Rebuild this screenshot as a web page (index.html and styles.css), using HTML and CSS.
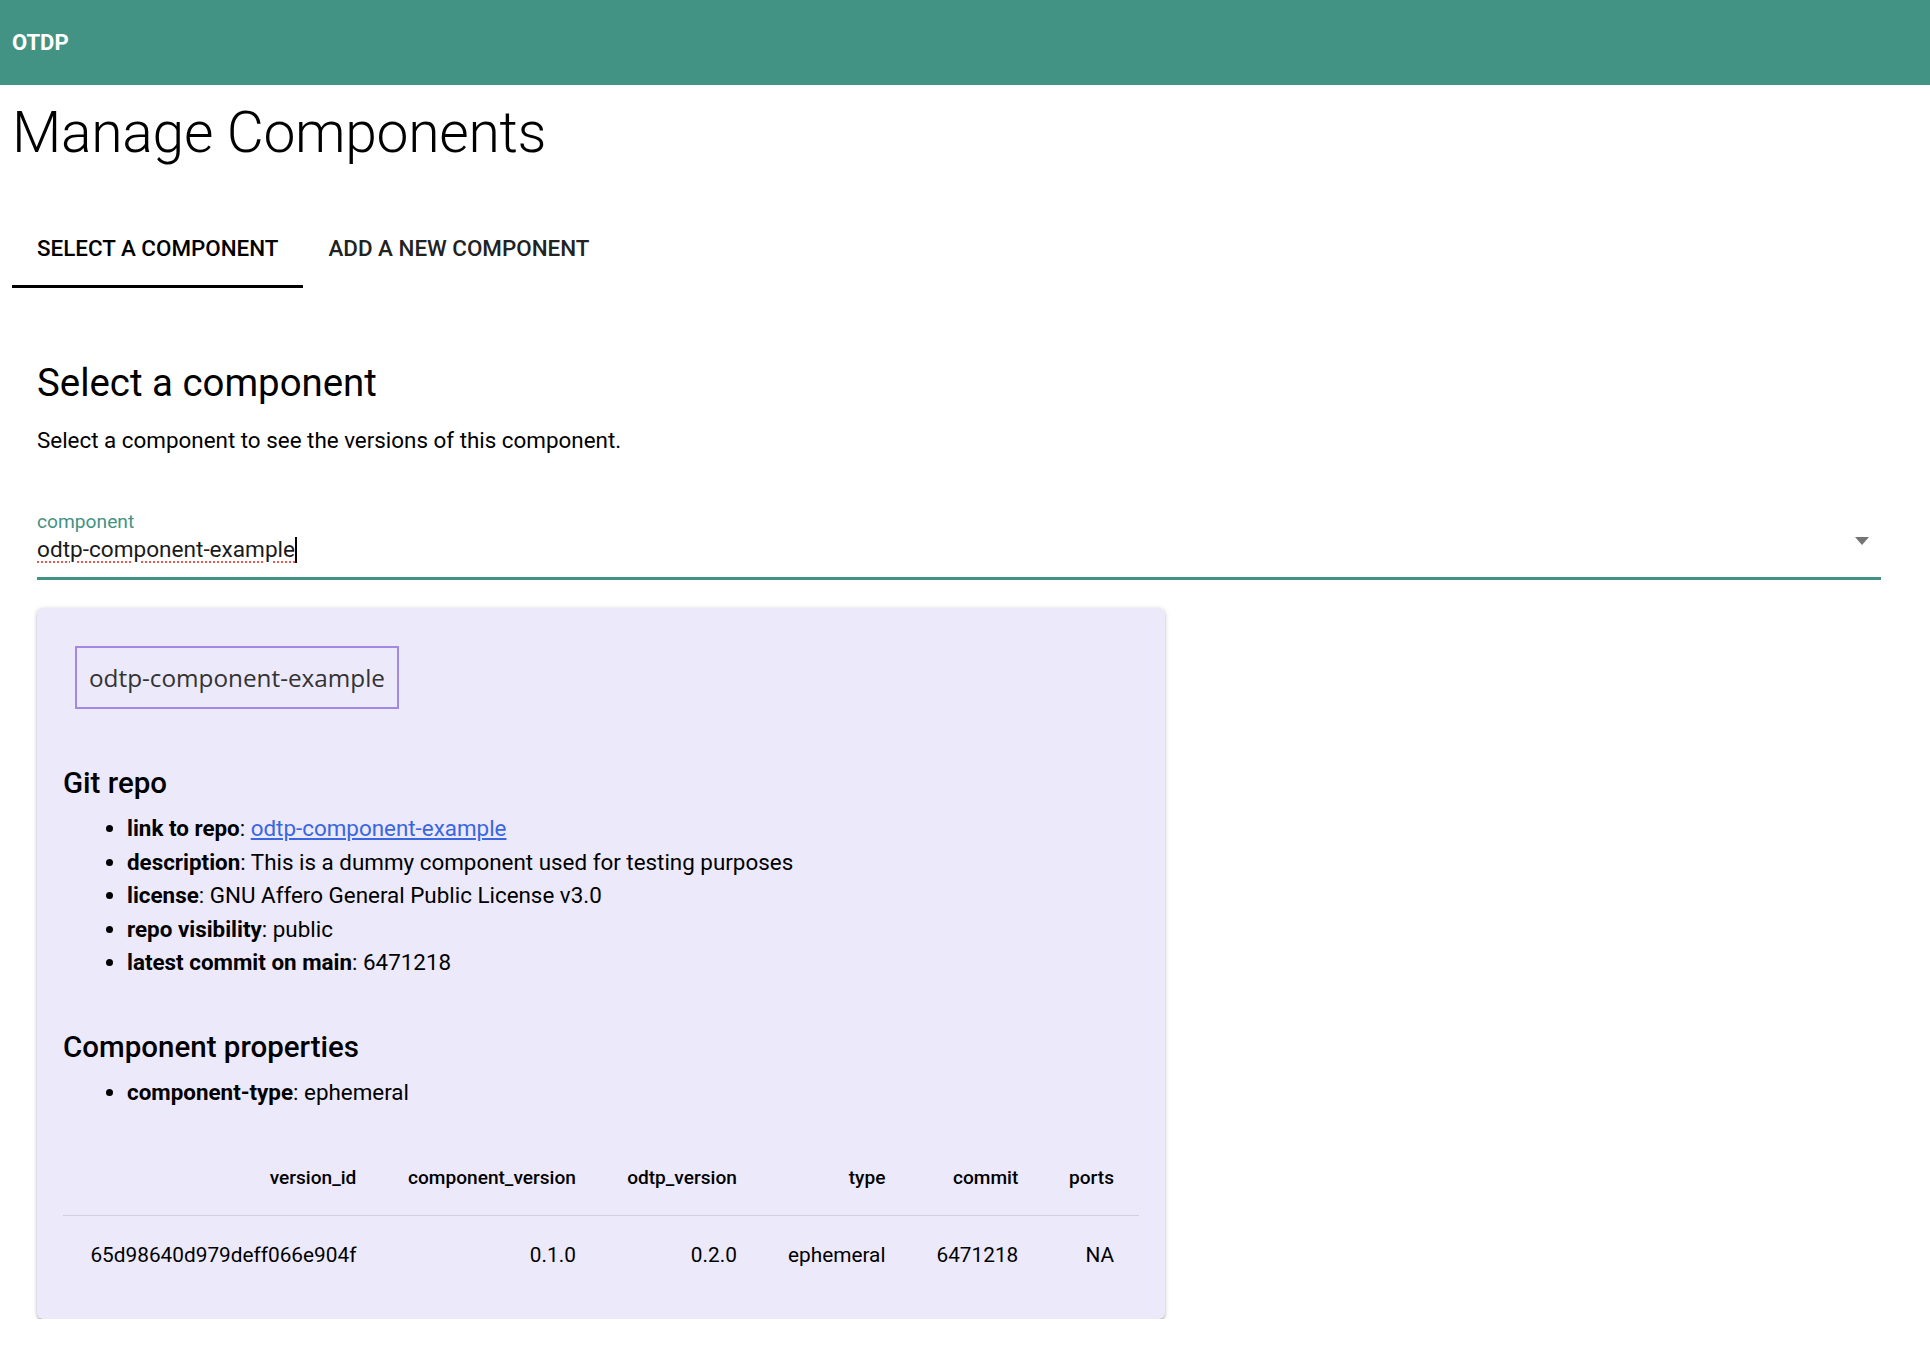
FILE: index.html
```html
<!DOCTYPE html>
<html>
<head>
<meta charset="utf-8">
<title>OTDP - Manage Components</title>
<link rel="stylesheet" href="styles.css">
</head>
<body>
<header class="topbar"><span class="brand">OTDP</span></header>
<main class="page">
  <h1 class="title">Manage Components</h1>
  <nav class="tabs">
    <div class="tab active">SELECT A COMPONENT</div>
    <div class="tab">ADD A NEW COMPONENT</div>
  </nav>
  <section class="panel">
    <h2 class="section-title">Select a component</h2>
    <p class="lead">Select a component to see the versions of this component.</p>
    <div class="field">
      <div class="field-main">
        <div class="field-label">component</div>
        <div class="field-value"><span class="misspelled">odtp-component-example</span><span class="caret"></span></div>
      </div>
      <span class="arrow"></span>
    </div>
    <div class="card">
      <div class="chip">odtp-component-example</div>
      <h3 class="card-title">Git repo</h3>
      <ul class="props">
        <li><b>link to repo</b>: <a href="#">odtp-component-example</a></li>
        <li><b>description</b>: This is a dummy component used for testing purposes</li>
        <li><b>license</b>: GNU Affero General Public License v3.0</li>
        <li><b>repo visibility</b>: public</li>
        <li><b>latest commit on main</b>: 6471218</li>
      </ul>
      <h3 class="card-title second">Component properties</h3>
      <ul class="props">
        <li><b>component-type</b>: ephemeral</li>
      </ul>
      <table class="versions">
        <thead>
          <tr><th>version_id</th><th>component_version</th><th>odtp_version</th><th>type</th><th>commit</th><th>ports</th></tr>
        </thead>
        <tbody>
          <tr><td>65d98640d979deff066e904f</td><td>0.1.0</td><td>0.2.0</td><td>ephemeral</td><td>6471218</td><td>NA</td></tr>
        </tbody>
      </table>
    </div>
  </section>
</main>
</body>
</html>
```

FILE: styles.css
```css
* { box-sizing: border-box; }
html, body { margin: 0; padding: 0; background: #fff; }
body { font-family: Roboto, "Liberation Sans", sans-serif; color: #000; }

.topbar {
  height: 85px;
  background: #439384;
  display: flex;
  align-items: center;
  padding-left: 12px;
}
.brand { color: #fff; font-size: 22px; font-weight: 700; }

.page { padding: 0 12px; }

.title {
  margin: 14px 0 0;
  font-size: 57px;
  line-height: 68px;
  font-weight: 300;
  letter-spacing: -0.3px;
}

.tabs { display: flex; margin-top: 47px; }
.tab {
  height: 74px;
  padding: 0 25px 3px;
  display: flex;
  align-items: center;
  font-size: 22.4px;
  line-height: 24px;
  font-weight: 500;
  color: #222;
  border-bottom: 3px solid transparent;
}
.tab.active { color: #000; border-bottom-color: #000; }

.panel { padding: 0 25px; }

.section-title {
  margin: 75px 0 0;
  font-size: 38.4px;
  line-height: 40px;
  font-weight: 400;
}
.lead {
  margin: 23px 0 0;
  font-size: 22.4px;
  line-height: 28px;
}

.field {
  margin-top: 55px;
  display: flex;
  align-items: center;
  border-bottom: 3px solid #439384;
  padding-bottom: 12px;
  margin-right: 12px;
}
.field-main { flex: 1; }
.field-label { color: #439384; font-size: 19.2px; line-height: 26px; }
.field-value { font-size: 22.6px; line-height: 30px; color: #1a1a1a; display: flex; align-items: center; }
.misspelled {
  text-decoration: underline dotted #e8584f;
  text-decoration-thickness: 2px;
  text-underline-offset: 4px;
}
.caret { display: inline-block; width: 2px; height: 26px; background: #000; }
.arrow {
  width: 0; height: 0;
  border-left: 7.5px solid transparent;
  border-right: 7.5px solid transparent;
  border-top: 8px solid #757575;
  margin-right: 12px;
  margin-top: 8px;
}

.card {
  margin-top: 28px;
  width: 1128px;
  background: #ece9fb;
  border-radius: 6px;
  box-shadow: 0 1px 5px rgba(0,0,0,0.2), 0 2px 2px rgba(0,0,0,0.14), 0 3px 1px -2px rgba(0,0,0,0.12);
  padding: 38px 26px 24px;
}
.chip {
  display: inline-block;
  margin-left: 12px;
  border: 2px solid #a388e4;
  padding: 0 12px;
  height: 63px;
  line-height: 59px;
  font-family: "Open Sans", "Noto Sans", sans-serif;
  font-size: 24.3px;
  color: #333;
}
.card-title {
  margin: 57px 0 0;
  font-size: 29.5px;
  line-height: 34px;
  font-weight: 500;
}
.card-title.second { margin-top: 50px; }
.props {
  margin: 12px 0 0;
  padding-left: 64px;
  font-size: 22.4px;
  line-height: 33.6px;
}
.props b { font-weight: 700; }
.props a { color: #3a66e0; }

.versions {
  margin-top: 30px;
  width: 100%;
  border-collapse: collapse;
}
.versions th, .versions td { text-align: right; padding: 0 25px; white-space: nowrap; }
.versions th { height: 76px; font-weight: 500; font-size: 19.1px; border-bottom: 1px solid #d2cfe2; }
.versions td { height: 79px; font-size: 20.8px; }
```
